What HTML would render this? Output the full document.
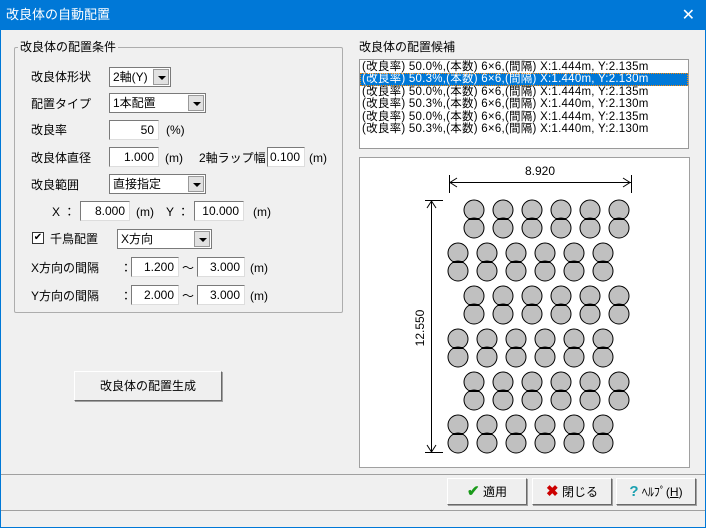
<!DOCTYPE html>
<html><head><meta charset="utf-8"><style>
*{margin:0;padding:0;box-sizing:border-box}
body{width:706px;height:528px;overflow:hidden;background:#f0f0f0;font-family:"Liberation Sans","Noto Sans CJK JP",sans-serif;font-size:12px;color:#000;position:relative}
.a{position:absolute;white-space:nowrap}
.u{position:absolute;white-space:nowrap;margin-top:2px}
.tb{left:0;top:0;width:706px;height:30px;background:#0078d7;color:#fff;font-size:13px;line-height:30px;padding-left:6px}
.inp{position:absolute;background:#fff;border:1px solid #7a7a7a;border-right-color:#ddd;border-bottom-color:#ddd;height:20px;text-align:right;padding-right:4px;line-height:18px;color:#000}
.sel{position:absolute;background:#fff;border:1px solid #7a7a7a;height:20px;line-height:18px;padding-left:3px}
.sel i{position:absolute;right:1px;top:1px;width:16px;height:16px;background:#e1e1e1;border:1px solid #999}
.sel i:after{content:"";position:absolute;left:4px;top:6px;border-left:4px solid transparent;border-right:4px solid transparent;border-top:4px solid #000}
.btn{position:absolute;background:#efefef;border:1px solid #fff;border-right-color:#696969;border-bottom-color:#696969;box-shadow:1px 1px 0 #a0a0a0;text-align:center}
.lb div{padding-left:2px;letter-spacing:0.25px}
</style></head><body>
<div style="position:absolute;left:0;top:0;width:706px;height:528px;border:1px solid #0078d7;border-top:none"></div>
<div class="a tb">改良体の自動配置</div>
<div class="a" style="right:11px;top:5px;color:#fff;font-size:16px">✕</div>

<div class="a" style="left:14px;top:47px;width:329px;height:266px;border:1px solid #adadad;border-radius:2px"></div>
<div class="a" style="left:18px;top:38px;background:#f0f0f0;padding:0 2px;font-size:12px">改良体の配置条件</div>

<div class="a" style="left:31px;top:68px">改良体形状</div>
<div class="sel" style="left:109px;top:67px;width:62px">2軸(Y)<i></i></div>
<div class="a" style="left:31px;top:95px">配置タイプ</div>
<div class="sel" style="left:109px;top:93px;width:97px">1本配置<i></i></div>
<div class="a" style="left:31px;top:121px">改良率</div>
<div class="inp" style="left:109px;top:120px;width:50px">50</div>
<div class="u" style="left:166px;top:121px">(%)</div>
<div class="a" style="left:31px;top:149px">改良体直径</div>
<div class="inp" style="left:109px;top:147px;width:50px">1.000</div>
<div class="u" style="left:165px;top:149px">(m)</div>
<div class="a" style="left:199px;top:149px">2軸ラップ幅</div>
<div class="inp" style="left:267px;top:147px;width:38px">0.100</div>
<div class="u" style="left:309px;top:149px">(m)</div>
<div class="a" style="left:31px;top:176px">改良範囲</div>
<div class="sel" style="left:109px;top:174px;width:97px">直接指定<i></i></div>
<div class="a" style="left:52px;top:203px">X ：</div>
<div class="inp" style="left:80px;top:201px;width:50px">8.000</div>
<div class="u" style="left:136px;top:203px">(m)</div>
<div class="a" style="left:166px;top:203px">Y ：</div>
<div class="inp" style="left:194px;top:201px;width:50px">10.000</div>
<div class="u" style="left:253px;top:203px">(m)</div>
<div class="a" style="left:32px;top:232px;width:12px;height:12px;border:1px solid #333;background:#fff;font-size:10px;line-height:10px;text-align:center">✔</div>
<div class="a" style="left:50px;top:230px">千鳥配置</div>
<div class="sel" style="left:117px;top:229px;width:95px">X方向<i></i></div>
<div class="a" style="left:31px;top:259px">X方向の間隔</div>
<div class="a" style="left:120px;top:259px">：</div>
<div class="inp" style="left:131px;top:257px;width:48px">1.200</div>
<div class="a" style="left:182px;top:259px">～</div>
<div class="inp" style="left:197px;top:257px;width:48px">3.000</div>
<div class="u" style="left:250px;top:259px">(m)</div>
<div class="a" style="left:31px;top:287px">Y方向の間隔</div>
<div class="a" style="left:120px;top:287px">：</div>
<div class="inp" style="left:131px;top:285px;width:48px">2.000</div>
<div class="a" style="left:182px;top:287px">～</div>
<div class="inp" style="left:197px;top:285px;width:48px">3.000</div>
<div class="u" style="left:250px;top:287px">(m)</div>

<div class="btn" style="left:74px;top:371px;width:148px;height:30px;line-height:28px">改良体の配置生成</div>

<div class="a" style="left:359px;top:38px">改良体の配置候補</div>
<div class="a lb" style="left:359px;top:59px;width:330px;height:90px;background:#fff;border:1px solid #999;font-size:11.5px;line-height:12.4px;padding-top:1px">
<div>(改良率) 50.0%,(本数) 6×6,(間隔) X:1.444m, Y:2.135m</div>
<div style="background:#0078d7;color:#fff;outline:1px dotted #f80;outline-offset:-1px">(改良率) 50.3%,(本数) 6×6,(間隔) X:1.440m, Y:2.130m</div>
<div>(改良率) 50.0%,(本数) 6×6,(間隔) X:1.444m, Y:2.135m</div>
<div>(改良率) 50.3%,(本数) 6×6,(間隔) X:1.440m, Y:2.130m</div>
<div>(改良率) 50.0%,(本数) 6×6,(間隔) X:1.444m, Y:2.135m</div>
<div>(改良率) 50.3%,(本数) 6×6,(間隔) X:1.440m, Y:2.130m</div>
</div>

<svg class="a" style="left:359px;top:157px" width="331" height="311" viewBox="359 157 331 311">
<rect x="359.5" y="157.5" width="330" height="310" fill="#fff" stroke="#a0a0a0"/>
<defs><g id="p"><circle cx="0" cy="0" r="10" fill="#c0c0c0" stroke="#000"/><circle cx="0" cy="18" r="10" fill="#c0c0c0" stroke="#000"/><line x1="-5" y1="9" x2="5" y2="9" stroke="#000" stroke-width="2"/></g>
<g id="r"><use href="#p" x="0"/><use href="#p" x="29"/><use href="#p" x="58"/><use href="#p" x="87"/><use href="#p" x="116"/><use href="#p" x="145"/></g></defs>
<use href="#r" x="474" y="210"/><use href="#r" x="458" y="253"/><use href="#r" x="474" y="296"/><use href="#r" x="458" y="339"/><use href="#r" x="474" y="382"/><use href="#r" x="458" y="425"/>
<g stroke="#000" fill="none">
<line x1="449.5" y1="175" x2="449.5" y2="193"/><line x1="631.5" y1="175" x2="631.5" y2="193"/>
<line x1="449" y1="182.5" x2="631" y2="182.5"/>
<path d="M457 178L450 182.5L457 187M623 178L630 182.5L623 187"/>
<line x1="425" y1="200.5" x2="443" y2="200.5"/><line x1="425" y1="452.5" x2="443" y2="452.5"/>
<line x1="431.5" y1="200" x2="431.5" y2="452"/>
<path d="M427 208L431.5 201L436 208M427 445L431.5 452L436 445"/>
</g>
<text x="540" y="175" font-size="12" text-anchor="middle" font-family="Liberation Sans">8.920</text>
<text x="0" y="0" font-size="12" text-anchor="middle" font-family="Liberation Sans" transform="translate(424 328) rotate(-90)">12.550</text>
</svg>

<div class="a" style="left:1px;top:474px;width:704px;border-top:1px solid #a0a0a0"></div>
<div class="btn" style="left:447px;top:478px;width:80px;height:27px;line-height:25px"><span style="color:#1a9a1a;font-weight:bold;font-size:15px">✔</span> 適用</div>
<div class="btn" style="left:532px;top:478px;width:80px;height:27px;line-height:25px"><span style="color:#c00;font-weight:bold;font-size:15px">✖</span> 閉じる</div>
<div class="btn" style="left:616px;top:478px;width:80px;height:27px;line-height:25px"><span style="color:#1aa0b0;font-weight:bold;font-size:15px">?</span> ﾍﾙﾌﾟ(<u>H</u>)</div>
<div class="a" style="left:1px;top:510px;width:704px;border-top:1px solid #a0a0a0"></div>
</body></html>
